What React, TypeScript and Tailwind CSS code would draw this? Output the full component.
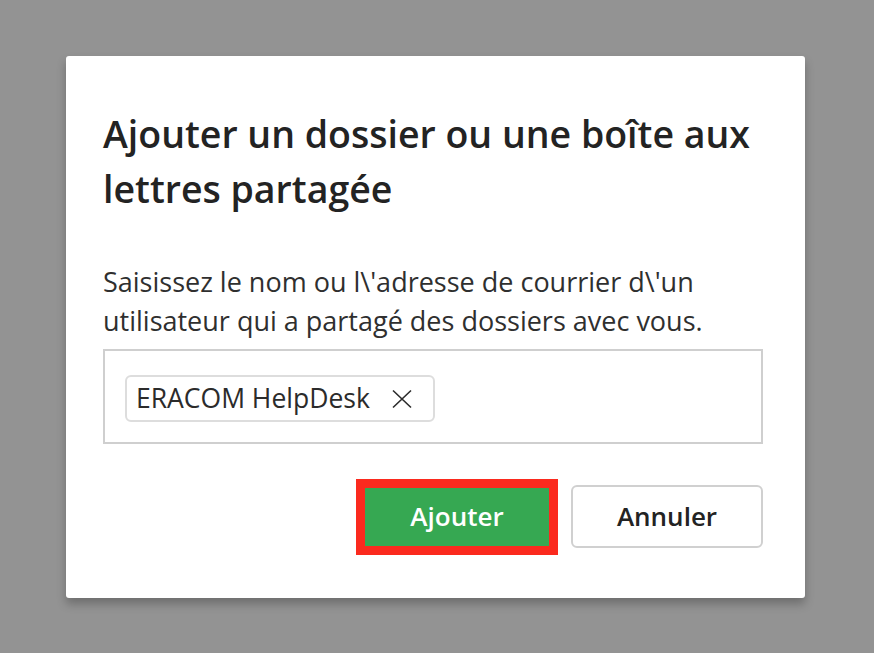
export default function App() {
  return (
    <div
      className="h-[653px] w-[874px] bg-[#939393] pl-[66px] pt-[56px]"
      style={{ fontFamily: '"Open Sans", "Noto Sans", sans-serif' }}
    >
      <div className="flex h-[542px] w-[739px] flex-col rounded-[3px] bg-white pl-[37px] pr-[43px] pt-[50px] shadow-[0_6px_10px_rgba(0,0,0,0.25)]">
        <h1 className="text-[37.5px] font-semibold leading-[55px] text-[#232323]">
          Ajouter un dossier ou une boîte aux lettres partagée
        </h1>
        <p className="mt-[46px] text-[27px] leading-[39px] text-[#2f2f2f]">
          Saisissez le nom ou l\'adresse de courrier d\'un utilisateur qui a partagé des dossiers avec vous.
        </p>
        <div className="mt-[9px] flex h-[95px] w-[660px] items-start border-2 border-[#cfcfcf] pl-[20px] pt-[24px]">
          <div className="flex h-[47px] items-center gap-[22px] rounded-[6px] border-2 border-[#dddddd] pl-[9px] pr-[21px]">
            <span className="text-[26.5px] text-[#2b2b2b]">ERACOM HelpDesk</span>
            <svg width="20" height="20" viewBox="0 0 20 20" className="text-[#2b2b2b]">
              <path d="M1 1.5 L19 18.5 M19 1.5 L1 18.5" stroke="currentColor" strokeWidth="1.6" fill="none" />
            </svg>
          </div>
        </div>
        <div className="mt-[41px] flex w-[660px] items-center justify-end gap-[22px]">
          <button className="h-[58px] w-[184px] bg-[#36a852] text-[26px] font-semibold text-white outline-[9px] outline-solid outline-[#fb2a1e]">
            Ajouter
          </button>
          <button className="h-[63px] w-[192px] rounded-[6px] border-2 border-[#d0d0d0] bg-white text-[26px] font-semibold text-[#232323]">
            Annuler
          </button>
        </div>
      </div>
    </div>
  );
}
